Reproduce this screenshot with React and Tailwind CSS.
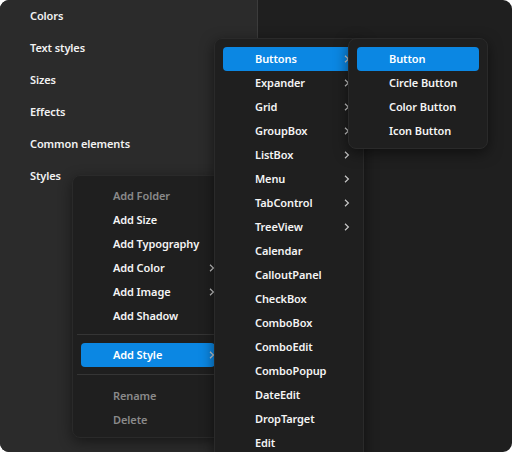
import React from "react";

const font = { fontFamily: "'Noto Sans', 'Open Sans', sans-serif" };

const sidebarItems = ["Colors", "Text styles", "Sizes", "Effects", "Common elements", "Styles"];

const controls = [
  { label: "Buttons", sub: true, active: true },
  { label: "Expander", sub: true },
  { label: "Grid", sub: true },
  { label: "GroupBox", sub: true },
  { label: "ListBox", sub: true },
  { label: "Menu", sub: true },
  { label: "TabControl", sub: true },
  { label: "TreeView", sub: true },
  { label: "Calendar" },
  { label: "CalloutPanel" },
  { label: "CheckBox" },
  { label: "ComboBox" },
  { label: "ComboEdit" },
  { label: "ComboPopup" },
  { label: "DateEdit" },
  { label: "DropTarget" },
  { label: "Edit" },
];

const buttons = ["Button", "Circle Button", "Color Button", "Icon Button"];

// chevron > for items with a submenu
const Chevron = ({ left }) => (
  <svg width="6" height="8" viewBox="0 0 6 8" className={`absolute top-[8px] ${left}`}>
    <path d="M1 0.8 L4.4 4 L1 7.2" fill="none" stroke="#c8c8c8" strokeWidth="1.2" />
  </svg>
);

const MenuItem = ({ label, sub, active, disabled, indent = "pl-[32px]", chev = "left-[128px]" }) => (
  <div
    className={`relative h-6 mx-2 rounded-[4px] flex items-center ${indent} pt-[1px] text-[11px] tracking-[-0.1px] font-semibold ${
      active ? "bg-[#0b87e3] text-white" : disabled ? "text-[#8a8a8a]" : "text-[#f4f4f4]"
    }`}
  >
    {label}
    {sub && <Chevron left={chev} />}
  </div>
);

export default function App() {
  return (
    <div className="w-[512px] h-[452px] bg-white" style={font}>
      <div className="relative w-full h-full rounded-[9px] overflow-hidden flex bg-[#1f1f1f]">
        {/* sidebar */}
        <div className="w-[258px] h-full bg-[#2b2b2b] border-r border-[#3c3c3c]">
          {sidebarItems.map((s) => (
            <div key={s} className="h-8 flex items-center pl-[30px] text-[11px] tracking-[-0.1px] font-semibold text-[#f2f2f2]">
              {s}
            </div>
          ))}
        </div>
        <div className="flex-1" />

        {/* context menu */}
        <div className="absolute left-[72px] top-[175px] w-[152px] h-[263px] rounded-[8px] bg-[#1f1f1f] border border-[#2a2a2a] shadow-[0_4px_14px_rgba(0,0,0,0.45)] pt-[8px]">
          <MenuItem label="Add Folder" disabled />
          <MenuItem label="Add Size" />
          <MenuItem label="Add Typography" />
          <MenuItem label="Add Color" sub />
          <MenuItem label="Add Image" sub />
          <MenuItem label="Add Shadow" />
          <div className="h-px bg-[#353535] mt-[6px] mb-[8px] ml-[4px]" />
          <MenuItem label="Add Style" sub active />
          <div className="h-px bg-[#353535] mt-[7px] mb-[9px] ml-[4px]" />
          <MenuItem label="Rename" disabled />
          <MenuItem label="Delete" disabled />
        </div>

        {/* controls submenu */}
        <div className="absolute left-[214px] top-[38px] w-[150px] h-[430px] rounded-[8px] bg-[#1f1f1f] border border-[#2a2a2a] shadow-[0_4px_14px_rgba(0,0,0,0.5)] pt-[8px]">
          {controls.map((c) => (
            <MenuItem key={c.label} label={c.label} sub={c.sub} active={c.active} chev="left-[121px]" />
          ))}
        </div>

        {/* buttons submenu */}
        <div className="absolute left-[348px] top-[38px] w-[140px] h-[111px] rounded-[8px] bg-[#1f1f1f] border border-[#2a2a2a] shadow-[0_4px_14px_rgba(0,0,0,0.5)] pt-[8px]">
          {buttons.map((b, i) => (
            <MenuItem key={b} label={b} active={i === 0} />
          ))}
        </div>
      </div>
    </div>
  );
}
